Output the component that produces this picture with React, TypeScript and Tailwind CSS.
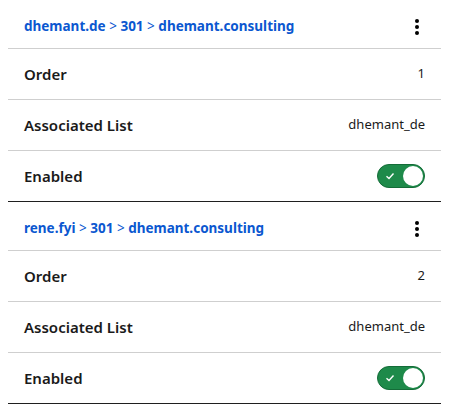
import React from 'react';

type Rule = {
  source: string;
  code: string;
  target: string;
  order: number;
  list: string;
  enabled: boolean;
};

const rules: Rule[] = [
  { source: 'dhemant.de', code: '301', target: 'dhemant.consulting', order: 1, list: 'dhemant_de', enabled: true },
  { source: 'rene.fyi', code: '301', target: 'dhemant.consulting', order: 2, list: 'dhemant_de', enabled: true },
];

function Kebab() {
  return (
    <button className="flex flex-col items-center gap-[2px] w-6 h-6 justify-center">
      <span className="block w-[4px] h-[4px] rounded-full bg-black" />
      <span className="block w-[4px] h-[4px] rounded-full bg-black" />
      <span className="block w-[4px] h-[4px] rounded-full bg-black" />
    </button>
  );
}

function Toggle({ on }: { on: boolean }) {
  return (
    <div
      className={`relative flex items-center w-[48px] h-[24px] rounded-full border ${
        on ? 'bg-[#1e8a4a] border-[#146c38]' : 'bg-gray-300 border-gray-400'
      }`}
    >
      <svg className="ml-[7px]" width="10" height="10" viewBox="0 0 10 10">
        <path d="M1.5 5.2 L4 7.5 L8.5 2.5" stroke="white" strokeWidth="1.4" fill="none" />
      </svg>
      <span className="absolute right-[1px] top-[1px] w-[20px] h-[20px] rounded-full bg-white" />
    </div>
  );
}

function RuleCard({ rule }: { rule: Rule }) {
  return (
    <div className="border-b border-[#1f1f1f]">
      <div className="flex items-center justify-between h-[49px] pt-[5px] pl-4 pr-[12px] border-b border-[#cfcfcf]">
        <p className="text-[13.5px] font-bold text-[#0b57d0]">
          {rule.source} <span className="font-normal">&gt;</span> {rule.code}{' '}
          <span className="font-normal">&gt;</span> {rule.target}
        </p>
        <Kebab />
      </div>
      <div className="flex items-center justify-between h-[51px] pl-4 pr-4 border-b border-[#cfcfcf]">
        <span className="text-[15px] font-semibold text-[#1a1a1a]">Order</span>
        <span className="text-[13px] text-[#1a1a1a]">{rule.order}</span>
      </div>
      <div className="flex items-center justify-between h-[51px] pl-4 pr-4 border-b border-[#cfcfcf]">
        <span className="text-[15px] font-semibold text-[#1a1a1a]">Associated List</span>
        <span className="text-[13px] text-[#1a1a1a]">{rule.list}</span>
      </div>
      <div className="flex items-center justify-between h-[50px] pl-4 pr-4">
        <span className="text-[15px] font-semibold text-[#1a1a1a]">Enabled</span>
        <Toggle on={rule.enabled} />
      </div>
    </div>
  );
}

export default function App() {
  return (
    <div className="px-2 bg-white" style={{ fontFamily: '"Noto Sans", "Open Sans", sans-serif' }}>
      {rules.map((r) => (
        <RuleCard key={r.source} rule={r} />
      ))}
    </div>
  );
}
